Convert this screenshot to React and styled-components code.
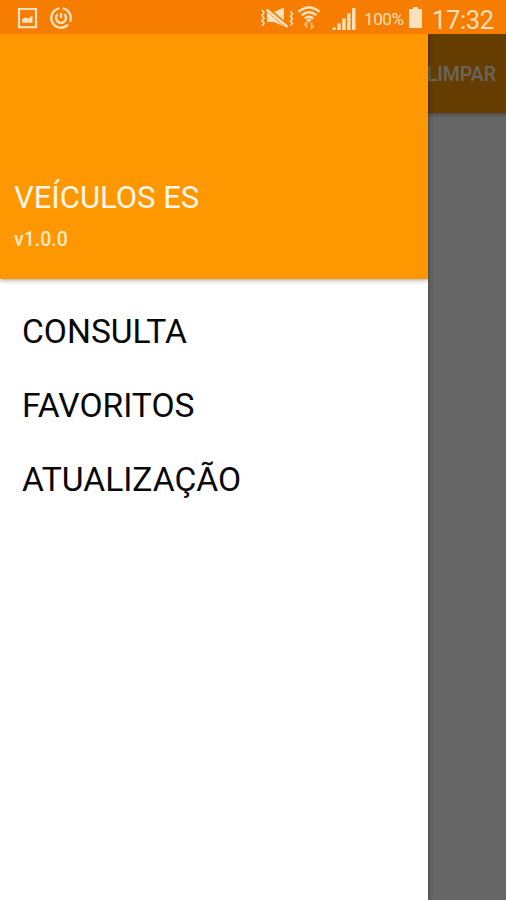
import React from "react";
import styled, { createGlobalStyle } from "styled-components";

const Global = createGlobalStyle`
  *, *::before, *::after { box-sizing: border-box; }
  body { margin: 0; font-family: Roboto, "Liberation Sans", sans-serif; }
`;

const Screen = styled.div`
  display: flex;
  flex-direction: column;
  width: 506px;
  height: 900px;
  overflow: hidden;
  background: #666;
`;

const StatusBar = styled.header`
  display: flex;
  justify-content: space-between;
  flex: 0 0 34px;
  height: 34px;
  background: #f77d00;
  color: #ffe0bd;
`;

const StatusGroup = styled.div`
  display: flex;
  align-items: flex-start;
`;

const StatusIcon = styled.svg`
  display: block;
  flex: none;
  height: 34px;
  width: ${(p) => p.$width}px;
  margin-left: ${(p) => p.$gap || 0}px;
`;

const BatteryLevel = styled.span`
  width: 44px;
  margin-left: 6px;
  font-size: 17px;
  line-height: 38px;
  white-space: nowrap;
  letter-spacing: -0.4px;
`;

const Clock = styled.time`
  width: 74px;
  margin-left: 8px;
  font-size: 25.5px;
  line-height: 40px;
  letter-spacing: -0.35px;
  white-space: nowrap;
`;

const Body = styled.div`
  display: grid;
  grid-template-columns: 428px 78px;
  flex: 1;
  min-height: 0;
  overflow: hidden;
`;

const Drawer = styled.nav`
  display: flex;
  flex-direction: column;
  background: #fff;
  box-shadow: 0 0 5px rgba(0, 0, 0, 0.45);
  z-index: 1;
`;

const DrawerHeader = styled.div`
  display: flex;
  flex-direction: column;
  justify-content: flex-end;
  height: 245px;
  padding: 0 14px 27px;
  background: #ff9800;
  color: #fff7ea;
  box-shadow: 0 1px 5px rgba(0, 0, 0, 0.4);
  clip-path: inset(0 0 -10px 0);
`;

const AppName = styled.h1`
  margin: 0 0 12px;
  font-size: 31px;
  font-weight: 400;
  line-height: 36px;
`;

const Version = styled.span`
  font-size: 19.5px;
  font-weight: 500;
  line-height: 24px;
  color: #ffe9c8;
`;

const Menu = styled.ul`
  list-style: none;
  margin: 0;
  padding: 15px 0 0;
`;

const MenuItem = styled.li`
  display: flex;
  align-items: center;
  height: 74px;
  padding: 0 22px;
  font-size: 33.6px;
  color: #080808;
`;

const Backdrop = styled.main`
  display: flex;
  flex-direction: column;
  background: #666;
`;

const Toolbar = styled.div`
  display: flex;
  align-items: center;
  justify-content: flex-end;
  height: 79px;
  padding: 3px 10px 0 0;
  overflow: hidden;
  background: #663d00;
`;

const ToolbarShadow = styled.div`
  height: 5px;
  background: linear-gradient(#505050, #666);
`;

const ClearButton = styled.span`
  flex: none;
  font-size: 19.5px;
  font-weight: 500;
  line-height: 24px;
  color: #6c655e;
`;

const PictureIcon = () => (
  <StatusIcon $width={22} $gap={16} viewBox="16 0 22 34">
    <path fill="none" stroke="currentColor" strokeWidth="2.2" d="M19 9h17v18.2H19z" />
    <path fill="currentColor" d="M22 22.800v-3.500l3.500-2 2.500 1.500 4.500-3.500v7.500z" />
  </StatusIcon>
);

const PowerIcon = () => (
  <StatusIcon $width={24} $gap={11} viewBox="49 0 24 34">
    <g fill="none" stroke="currentColor" strokeWidth="2.4">
      <path d="M59.5 8.4a9.7 9.7 0 1 0 8.5 16.3M62.8 8.4a9.7 9.7 0 0 1 7.2 13.4" />
      <path d="M57.6 14.2a5 5 0 1 0 6.8 0M61 13v5" />
    </g>
  </StatusIcon>
);

const MutedIcon = () => (
  <StatusIcon $width={34} viewBox="260 0 34 34">
    <path fill="currentColor" d="M267 12h7l10-4.500v19L274 22h-7z" />
    <path stroke="#f77d00" strokeWidth="4.6" d="M266 8l22 19" />
    <path stroke="currentColor" strokeWidth="2.6" d="M266.500 9.500l21 17.500" />
    <path
      fill="none"
      stroke="currentColor"
      strokeWidth="1.6"
      d="M262 10l2 2.7-2 2.7 2 2.6-2 2.7 2 2.6-2 2.7M290.5 11.5l2 2.3-2 2.4 2 2.3-2 2.4 2 2.3-2 2.3"
    />
  </StatusIcon>
);

const WifiIcon = () => (
  <StatusIcon $width={26} $gap={3} viewBox="297 0 26 34">
    <g fill="none" stroke="currentColor" strokeWidth="2.5">
      <path d="M298.5 11.7q10.5-8.5 21 0M301.7 15.2q7.3-5.8 14.6 0M304.8 18.5q4.2-3.3 8.4 0" />
    </g>
    <path fill="currentColor" d="M306.3 19.8q2.7-1.8 5.4 0L309 22.5z" />
    <path fill="none" stroke="#ffb866" strokeWidth="1.9" d="M306.5 28v-5.500l-2.500 2.500M311.500 22.500V28l2.500-2.500" />
  </StatusIcon>
);

const SignalIcon = () => (
  <StatusIcon $width={26} $gap={9} viewBox="332 0 26 34">
    <path
      fill="currentColor"
      d="M332.5 27.5h3.3V30h-3.3zM337.300 23.500h3.400V30h-3.400zM342.200 18.500h3.400V30h-3.400zM347.100 13.500h3.400V30h-3.400zM352 8h3.500v22H352z"
    />
  </StatusIcon>
);

const BatteryIcon = () => (
  <StatusIcon $width={16} viewBox="408 0 16 34">
    <path fill="currentColor" d="M413 7h5v2h4v19h-13V9h4z" />
  </StatusIcon>
);

const menu = ["CONSULTA", "FAVORITOS", "ATUALIZAÇÃO"];

export default function App() {
  return (
    <Screen>
      <Global />
      <StatusBar>
        <StatusGroup>
          <PictureIcon />
          <PowerIcon />
        </StatusGroup>
        <StatusGroup>
          <MutedIcon />
          <WifiIcon />
          <SignalIcon />
          <BatteryLevel>100%</BatteryLevel>
          <BatteryIcon />
          <Clock>17:32</Clock>
        </StatusGroup>
      </StatusBar>
      <Body>
        <Drawer>
          <DrawerHeader>
            <AppName>VEÍCULOS ES</AppName>
            <Version>v1.0.0</Version>
          </DrawerHeader>
          <Menu>
            {menu.map((label) => (
              <MenuItem key={label}>{label}</MenuItem>
            ))}
          </Menu>
        </Drawer>
        <Backdrop>
          <Toolbar>
            <ClearButton>LIMPAR</ClearButton>
          </Toolbar>
          <ToolbarShadow />
        </Backdrop>
      </Body>
    </Screen>
  );
}
